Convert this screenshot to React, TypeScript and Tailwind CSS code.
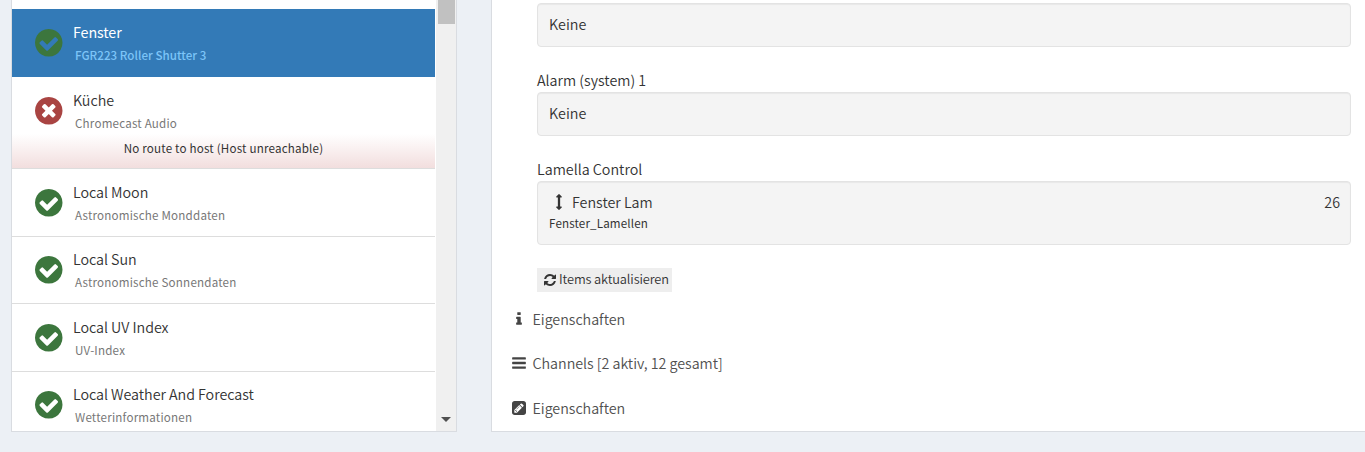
import type { ReactNode } from "react";

type IconProps = { className?: string; viewBox?: string; d: string };

function Icon({ className, viewBox = "0 0 1792 1792", d }: IconProps) {
  return (
    <svg className={className} viewBox={viewBox} fill="currentColor" aria-hidden="true">
      <path d={d} />
    </svg>
  );
}

const CIRCLE =
  "M1664 896q0 209-103 385.5t-279.5 279.5-385.5 103-385.5-103-279.5-279.5-103-385.5 103-385.5 279.5-279.5 385.5-103 385.5 103 279.5 279.5 103 385.5z";
const CHECK =
  "M1412 734q0-28-18-46l-91-90q-19-19-45-19t-45 19l-408 407-226-226q-19-19-45-19t-45 19l-91 90q-18 18-18 46 0 27 18 45l362 362q19 19 45 19 27 0 46-19l543-543q18-18 18-45zm252 162q0 209-103 385.5t-279.5 279.5-385.5 103-385.5-103-279.5-279.5-103-385.5 103-385.5 279.5-279.5 385.5-103 385.5 103 279.5 279.5 103 385.5z";
const TIMES =
  "M1277 1122q0-26-19-45l-181-181 181-181q19-19 19-45 0-27-19-46l-90-90q-19-19-46-19-26 0-45 19l-181 181-181-181q-19-19-45-19-27 0-46 19l-90 90q-19 19-19 46 0 26 19 45l181 181-181 181q-19 19-19 45 0 27 19 46l90 90q19 19 46 19 26 0 45-19l181-181 181 181q19 19 45 19 27 0 46-19l90-90q19-19 19-46z" +
  CIRCLE;
const REFRESH =
  "M1639 1056q0 5-1 7-64 268-268 434.5t-478 166.5q-146 0-282.5-55t-243.5-157l-129 129q-19 19-45 19t-45-19-19-45v-448q0-26 19-45t45-19h448q26 0 45 19t19 45-19 45l-137 137q71 66 161 102t187 36q134 0 250-65t186-179q11-17 53-117 8-23 30-23h192q13 0 22.5 9.5t9.5 22.5zm25-800v448q0 26-19 45t-45 19h-448q-26 0-45-19t-19-45 19-45l138-138q-148-137-349-137-134 0-250 65t-186 179q-11 17-53 117-8 23-30 23h-199q-13 0-22.5-9.5t-9.5-22.5v-7q65-268 270-434.5t480-166.5q146 0 284 55.5t245 156.5l130-129q19-19 45-19t45 19 19 45z";
const INFO =
  "M1216 1344v128q0 26-19 45t-45 19h-512q-26 0-45-19t-19-45v-128q0-26 19-45t45-19h64v-384h-64q-26 0-45-19t-19-45v-128q0-26 19-45t45-19h384q26 0 45 19t19 45v576h64q26 0 45 19t19 45zm-128-1152v192q0 26-19 45t-45 19h-256q-26 0-45-19t-19-45v-192q0-26 19-45t45-19h256q26 0 45 19t19 45z";
const BARS =
  "M1664 1344v128q0 26-19 45t-45 19h-1408q-26 0-45-19t-19-45v-128q0-26 19-45t45-19h1408q26 0 45 19t19 45zm0-512v128q0 26-19 45t-45 19h-1408q-26 0-45-19t-19-45v-128q0-26 19-45t45-19h1408q26 0 45 19t19 45zm0-512v128q0 26-19 45t-45 19h-1408q-26 0-45-19t-19-45v-128q0-26 19-45t45-19h1408q26 0 45 19t19 45z";
const PENCIL =
  "M404 1108l152 152-52 52h-56v-96h-96v-56zm414-390q14 13-3 30l-291 291q-17 17-30 3-14-13 3-30l291-291q17-17 30-3zm-274 690l544-544-288-288-544 544v288h288zm608-608l92-92q28-28 28-68t-28-68l-152-152q-28-28-68-28t-68 28l-92 92zm384-384v960q0 119-84.5 203.5t-203.5 84.5h-960q-119 0-203.5-84.5t-84.5-203.5v-960q0-119 84.5-203.5t203.5-84.5h960q119 0 203.5 84.5t84.5 203.5z";
const ARROWS_V =
  "M1216 320q0 26-19 45t-45 19h-128v1024h128q26 0 45 19t19 45-19 45l-256 256q-19 19-45 19t-45-19l-256-256q-19-19-19-45t19-45 45-19h128v-1024h-128q-26 0-45-19t-19-45 19-45l256-256q19-19 45-19t45 19l256 256q19 19 19 45z";

type Thing = {
  name: string;
  type: string;
  height: string;
  active?: boolean;
  error?: string;
  tight?: boolean;
};

const THINGS: Thing[] = [
  { name: "Fenster", type: "FGR223 Roller Shutter 3", height: "h-[68px]", active: true },
  { name: "Küche", type: "Chromecast Audio", height: "h-[92px]", error: "No route to host (Host unreachable)" },
  { name: "Local Moon", type: "Astronomische Monddaten", height: "h-[68px]" },
  { name: "Local Sun", type: "Astronomische Sonnendaten", height: "h-[67px]", tight: true },
  { name: "Local UV Index", type: "UV-Index", height: "h-[68px]" },
  { name: "Local Weather And Forecast", type: "Wetterinformationen", height: "h-[68px]", tight: true },
];

function ThingRow({ thing }: { thing: Thing }) {
  const { name, type, height, active, error, tight } = thing;
  return (
    <li
      className={`flex shrink-0 flex-col border-b ${height} ${
        active ? "border-[#337ab7] bg-[#337ab7]" : "border-[#dddddd] bg-white"
      }`}
    >
      <div className={`flex pl-[23px] ${tight ? "-mt-px" : ""}`}>
        <Icon
          d={error ? TIMES : CHECK}
          viewBox="128 128 1536 1536"
          className={`mt-5 size-[27.5px] shrink-0 ${error ? "text-[#a94442]" : "text-[#3c763d]"}`}
        />
        <div className="flex flex-col pl-[10.5px] pt-3">
          <span
            className={`text-[14.3px] leading-[22px] ${
              active ? "tracking-[-0.1px] text-white" : "font-[350] tracking-[-0.04px] text-[#333333]"
            }`}
          >
            {name}
          </span>
          <span
            className={`pl-[2px] pt-px text-[11.6px] leading-[22px] ${
              active ? "font-medium tracking-[0.03px] text-[#7cc4f8]" : "tracking-[0.2px] text-[#777777]"
            }`}
          >
            {type}
          </span>
        </div>
      </div>
      {error && (
        <div className="mt-auto h-[35px] bg-linear-to-b from-white to-[#f2dede] text-center text-[11.6px] leading-[29px] tracking-[0.2px] text-[#333333]">
          {error}
        </div>
      )}
    </li>
  );
}

function Well({ children, className }: { children: ReactNode; className: string }) {
  return (
    <div
      className={`rounded-[4px] border border-[#e3e3e3] bg-[#f4f4f4] pl-[11px] pr-[10px] shadow-[inset_0_1px_1px_rgba(0,0,0,0.05)] ${className}`}
    >
      {children}
    </div>
  );
}

function Section({ d, viewBox, iconClass, children }: { d: string; viewBox?: string; iconClass: string; children: ReactNode }) {
  return (
    <div className="flex items-center text-[14.3px] font-[350] leading-[22px] tracking-[-0.03px] text-[#505050]">
      <span className="flex w-[14px] justify-center text-[#444444]">
        <Icon d={d} viewBox={viewBox} className={`shrink-0 ${iconClass}`} />
      </span>
      <span className="pl-[6.5px]">{children}</span>
    </div>
  );
}

export default function App() {
  return (
    <div className="flex h-[452px] w-[1365px] gap-[34px] overflow-hidden bg-[#ecf0f5] pl-[11px] font-['Noto_Sans_CJK_SC',sans-serif] text-[#333333]">
      <aside className="flex h-[432px] w-[446px] shrink-0 overflow-hidden border-x border-b border-[#d9dce1] bg-white">
        <ul className="flex w-[423px] shrink-0 flex-col pt-[9px]">
          {THINGS.map((thing) => (
            <ThingRow key={thing.name} thing={thing} />
          ))}
        </ul>
        <div className="ml-px flex flex-1 flex-col justify-between bg-[#f0f0f0]">
          <div className="ml-[2px] h-6 w-[17px] bg-[#c1c1c1]" />
          <svg className="mb-[9px] ml-[5px] h-[5px] w-[10px]" viewBox="0 0 10 5" fill="#505050">
            <path d="M0 0h10L5 5z" />
          </svg>
        </div>
      </aside>

      <main className="flex h-[432px] w-[880px] shrink-0 flex-col border-b border-l border-[#d9dce1] bg-white pt-[3px]">
        <div className="ml-[45px] flex w-[814px] flex-col text-[14.3px] font-[350] leading-[22px] text-[#333333]">
          <Well className="h-11 pt-[9px]">Keine</Well>
          <div className="pb-px pt-[22px]">Alarm (system) 1</div>
          <Well className="h-11 pt-[9px]">Keine</Well>
          <div className="pb-px pt-[22px]">Lamella Control</div>
          <Well className="flex h-16 flex-col pt-[9px]">
            <div className="flex items-center">
              <Icon d={ARROWS_V} className="ml-[2px] size-4" />
              <span className="pl-[5px]">Fenster Lam</span>
              <span className="ml-auto">26</span>
            </div>
            <div className="text-[11.6px] font-normal leading-[20px] tracking-[0.15px]">Fenster_Lamellen</div>
          </Well>
          <button className="mt-[23px] flex h-6 w-[135px] items-center bg-[#eeeeee] pl-[7px] text-[12.5px] leading-[22px]">
            <Icon d={REFRESH} viewBox="128 128 1536 1536" className="size-3" />
            <span className="pb-[2px] pl-[3px] tracking-[-0.12px] text-[12.8px]">Items aktualisieren</span>
          </button>
        </div>
        <div className="ml-5 mt-4 flex flex-col">
          <Section d={INFO} iconClass="size-4">
            Eigenschaften
          </Section>
          <div className="mb-[23px] mt-[22px]">
            <Section d={BARS} iconClass="size-4">
              Channels [2 aktiv, 12 gesamt]
            </Section>
          </div>
          <Section d={PENCIL} viewBox="0 128 1536 1536" iconClass="size-[14px]">
            Eigenschaften
          </Section>
        </div>
      </main>
    </div>
  );
}
